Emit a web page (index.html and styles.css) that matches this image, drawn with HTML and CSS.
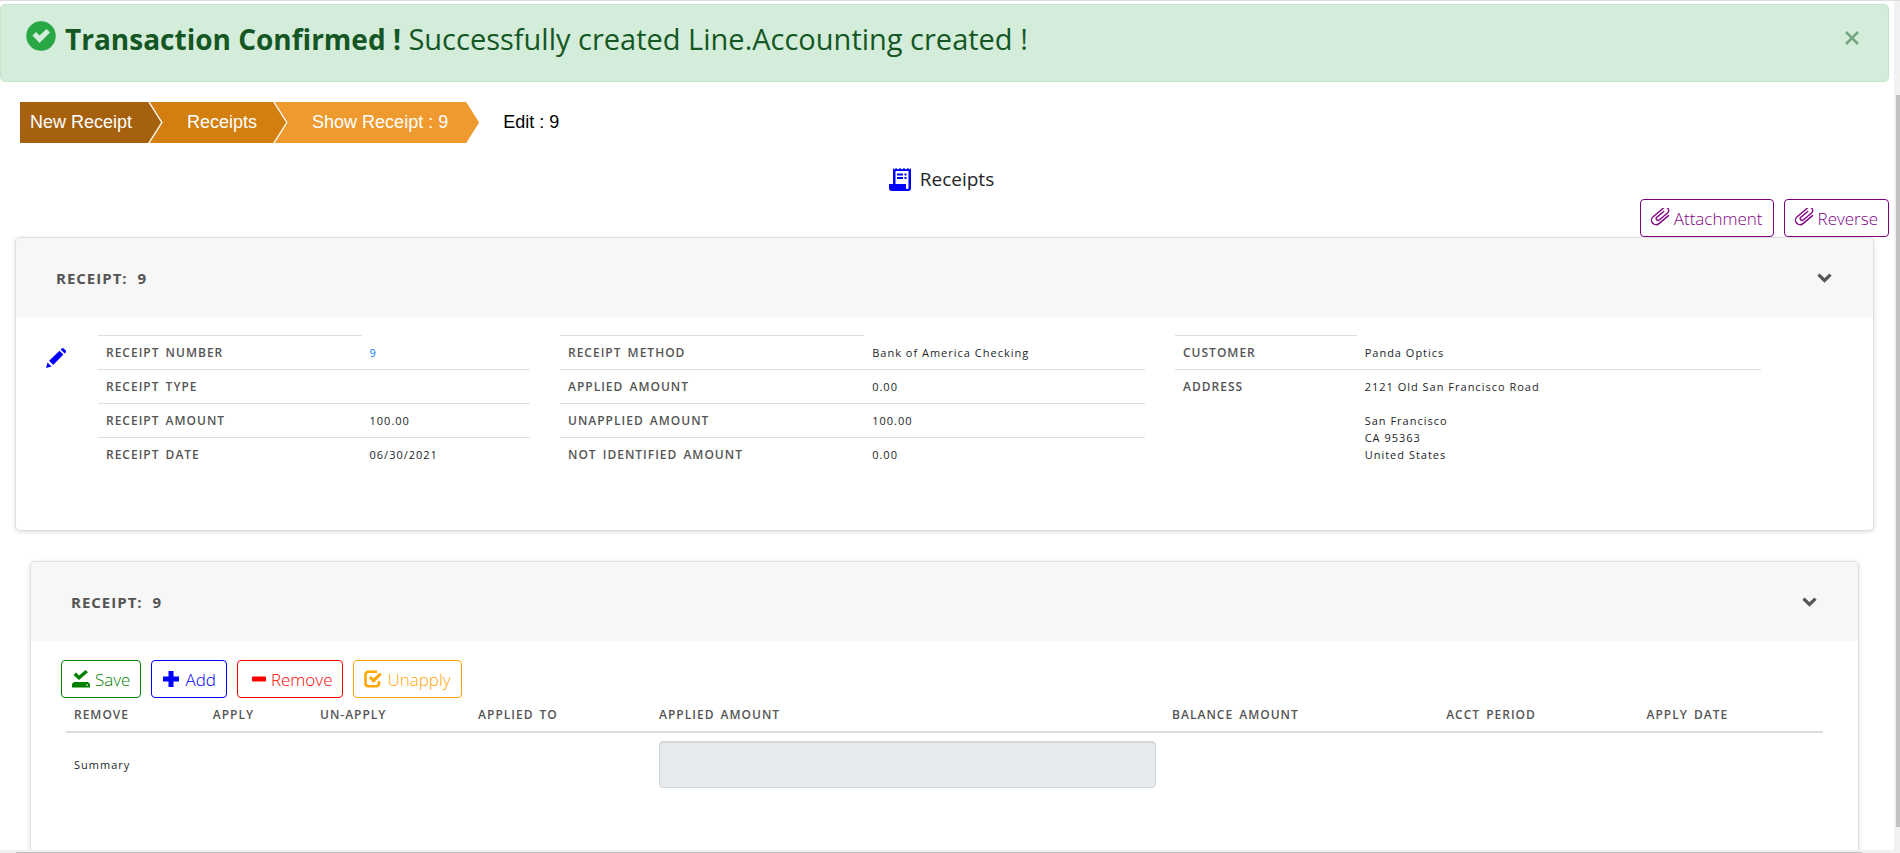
FILE: index.html
```html
<!DOCTYPE html>
<html lang="en">
<head>
<meta charset="utf-8">
<title>Receipts</title>
<link rel="stylesheet" href="styles.css">
</head>
<body>
<svg class="sprite" aria-hidden="true">
  <symbol id="clip" viewBox="0 0 20 20"><path d="M16 14.500H3.500a4.500 4.500 0 0 1 0-9H17a3.200 3.200 0 0 1 0 6.400H6a1.800 1.800 0 0 1 0-3.600H15" transform="translate(0 -2) rotate(-40 10 10)" fill="none" stroke="currentColor" stroke-width="1.400" stroke-linecap="round"/></symbol>
  <symbol id="chevron" viewBox="0 0 15 10"><path d="M1.500 1.700 7.500 7.500 13.500 1.700" fill="none" stroke="currentColor" stroke-width="3.200"/></symbol>
</svg>
<div class="page">
  <div class="alert" role="alert">
    <svg class="alert-icon" viewBox="0 0 30 30"><circle cx="15" cy="15" r="14.700" fill="#28a745"/><path d="M6.500 14.500 10 11l3.500 3.500L20.500 8 24 11.500 13.500 22z" fill="#d4edda"/></svg>
    <p class="alert-text"><strong>Transaction Confirmed !</strong> Successfully created Line.Accounting created !</p>
    <button class="close" type="button" aria-label="Close"><svg viewBox="0 0 14 14"><path d="M1 1l12 12M13 1L1 13" stroke="currentColor" stroke-width="2.600"/></svg></button>
  </div>

  <nav class="crumbs" aria-label="Breadcrumb">
    <a class="crumb crumb-dark" href="#">New Receipt</a>
    <a class="crumb crumb-mid" href="#">Receipts</a>
    <a class="crumb crumb-light" href="#">Show Receipt : 9</a>
    <span class="crumb-current">Edit : 9</span>
  </nav>

  <h1 class="title">
    <svg class="title-icon" viewBox="0 0 22 24"><path d="M4 17V1l1.500 1.500L7 1l2 1.500L11 1l2 1.500L15 1l2 1.500L19 1l1.500 1.500L22 1v20a3 3 0 0 1-3 3H3a3 3 0 0 1-3-3v-4zM6.500 4v13H17v4c0 1.300 2.500 1.300 2.500 0V4z" fill="#00f" fill-rule="evenodd"/><path d="M8 6.500h6v2H8zM8 10h6v2H8zM15.500 6.500h2v2h-2zM15.500 10h2v2h-2z" fill="#00f"/></svg>
    Receipts
  </h1>

  <div class="actions">
    <button class="btn btn-purple" type="button"><svg class="clip"><use href="#clip"/></svg>Attachment</button>
    <button class="btn btn-purple" type="button"><svg class="clip"><use href="#clip"/></svg>Reverse</button>
  </div>

  <section class="card">
    <header class="card-head">
      <h2>Receipt: 9</h2>
      <button class="toggle" type="button" aria-label="Collapse"><svg><use href="#chevron"/></svg></button>
    </header>
    <div class="details">
      <button class="edit" type="button" aria-label="Edit receipt"><svg viewBox="0 0 20 20"><path d="M0 20l1.500-5.500 4 4zM3.200 12.800 13.500 2.700l3.900 3.900L7.200 17zM14.600 1.600 15.700.5q1-.9 2 0l2 2q.8 1 0 1.900l-1.100 1.100z" fill="#00f"/></svg></button>
      <table class="facts facts-a">
        <tr><th scope="row">Receipt Number</th><td><a href="#">9</a></td></tr>
        <tr><th scope="row">Receipt Type</th><td></td></tr>
        <tr><th scope="row">Receipt Amount</th><td>100.00</td></tr>
        <tr><th scope="row">Receipt Date</th><td>06/30/2021</td></tr>
      </table>
      <table class="facts facts-b">
        <tr><th scope="row">Receipt Method</th><td>Bank of America Checking</td></tr>
        <tr><th scope="row">Applied Amount</th><td>0.00</td></tr>
        <tr><th scope="row">Unapplied Amount</th><td>100.00</td></tr>
        <tr><th scope="row">Not Identified Amount</th><td>0.00</td></tr>
      </table>
      <table class="facts facts-c">
        <tr><th scope="row">Customer</th><td>Panda Optics</td></tr>
        <tr><th scope="row">Address</th><td>2121 Old San Francisco Road<br><br>San Francisco<br>CA 95363<br>United States</td></tr>
      </table>
    </div>
  </section>

  <section class="card card-inner">
    <header class="card-head">
      <h2>Receipt: 9</h2>
      <button class="toggle" type="button" aria-label="Collapse"><svg><use href="#chevron"/></svg></button>
    </header>
    <div class="lines">
      <div class="toolbar">
        <button class="btn btn-green" type="button"><svg viewBox="0 0 18 18"><path d="M1.500 5 4 2.500l3 3L13.500 0 16 2.300 7 10zM2 12h14l2 2v3.500H0V14z" fill="currentColor"/><path d="M14 15h2" stroke="#fff"/></svg>Save</button>
        <button class="btn btn-blue" type="button"><svg viewBox="0 0 18 18"><path d="M6.500 1h5v5.500H17v5h-5.500V17h-5v-5.500H1v-5h5.500z" fill="currentColor"/></svg>Add</button>
        <button class="btn btn-red" type="button"><svg viewBox="0 0 18 18"><rect x="4" y="6.500" width="14" height="5" rx="1" fill="currentColor"/></svg>Remove</button>
        <button class="btn btn-orange" type="button"><svg viewBox="0 0 18 18"><path d="M13 1.800H4.500Q1.500 1.800 1.500 5v8Q1.500 16.300 4.500 16.300H12q3 0 3-3.300v-2" fill="none" stroke="currentColor" stroke-width="2.600"/><path d="M5 8 7 6l2.500 2.500L15.500 2.500l2.200 2.200L9.500 13z" fill="currentColor"/></svg>Unapply</button>
      </div>
      <table class="grid">
        <colgroup><col class="c-remove"><col class="c-apply"><col class="c-unapply"><col class="c-to"><col class="c-amount"><col class="c-balance"><col class="c-period"><col></colgroup>
        <thead><tr><th>Remove</th><th>Apply</th><th>Un-apply</th><th>Applied To</th><th>Applied Amount</th><th>Balance Amount</th><th>Acct Period</th><th>Apply Date</th></tr></thead>
        <tbody><tr><td>Summary</td><td></td><td></td><td></td><td><input class="field" type="text" aria-label="Applied amount" disabled></td><td></td><td></td><td></td></tr></tbody>
      </table>
    </div>
  </section>
</div>
<div class="scroll-y"><div class="thumb-y"></div></div>
<div class="scroll-x"><div class="thumb-x"></div></div>
</body>
</html>
```
FILE: styles.css
```css
* { box-sizing: border-box; }
html { overflow: hidden; height: 100%; }
body {
  margin: 0;
  border-top: 1px solid #dcdce2;
  background: #fff;
  color: #212529;
  font-family: "Open Sans", "Noto Sans", sans-serif;
  font-size: 16px;
}
button { font-family: inherit; background: none; border: 0; padding: 0; }
h1, h2, p { margin: 0; font-weight: 400; }
a { color: #007bff; text-decoration: none; }
.sprite { position: absolute; width: 0; height: 0; }
.page { padding: 3px 11px 0 0; }

.alert {
  display: flex;
  align-items: flex-start;
  gap: 9px;
  height: 78px;
  padding: 16px 29px 0 25px;
  border: 1px solid #c3e6cb;
  border-radius: 5px;
  background: #d4edda;
  color: #155724;
}
.alert-icon { width: 30px; height: 30px; }
.alert-text { flex: 1; font-size: 29px; line-height: 36px; }
.alert-text strong { font-size: 28px; }
.close { padding: 10px 0; color: #76a681; }
.close svg { display: block; width: 14px; height: 14px; }

.crumbs {
  display: flex;
  height: 41px;
  margin: 20px 0 0 20px;
  font: 18px/41px "Liberation Sans", Arial, sans-serif;
}
.crumb {
  height: 41px;
  margin-right: -13px;
  padding: 0 31px 0 37px;
  color: #fff;
  clip-path: polygon(0 0, calc(100% - 13px) 0, 100% 50%, calc(100% - 13px) 100%, 0 100%);
}
.crumb-dark { z-index: 3; padding-left: 10px; background: #a5610d; }
.crumb-mid { z-index: 2; background: #d27f10; }
.crumb-light { z-index: 1; background: #ee9a2e; }
.crumb-dark, .crumb-mid { position: relative; }
.crumb-dark::after, .crumb-mid::after {
  content: "";
  position: absolute;
  inset: 0;
  background: #fff3e0;
  clip-path: polygon(calc(100% - 15px) 0, calc(100% - 13px) 0, 100% 50%, calc(100% - 13px) 100%, calc(100% - 15px) 100%, calc(100% - 2px) 50%);
}
.crumb-current { padding-left: 37px; color: #000; }

.title {
  display: flex;
  justify-content: center;
  align-items: center;
  gap: 9px;
  height: 30px;
  margin: 21px 6px 0 0;
  font-size: 19px;
}
.title-icon { width: 22px; height: 24px; }

.actions { display: flex; justify-content: flex-end; gap: 10px; margin-top: 5px; }
.btn {
  display: flex;
  align-items: center;
  gap: 5px;
  height: 38px;
  padding: 0 10px;
  border: 1px solid currentColor;
  border-radius: 4px;
  background: #fff;
  font-size: 17px;
  font-weight: 300;
}
.btn svg { width: 18px; height: 18px; }
.btn .clip { width: 20px; height: 20px; overflow: visible; }
.btn-purple { gap: 3px; color: #800080; }
.btn-green { color: #008000; }
.btn-blue { color: #00f; }
.btn-red { color: #f00; }
.btn-orange { color: #ffa500; }

.card {
  margin: 0 15px;
  border: 1px solid #dedfe0;
  border-radius: 5px;
  background: #fff;
  box-shadow: 0 1px 4px rgba(0, 0, 0, .14);
  overflow: hidden;
}
.card-inner { margin: 30px 30px 0; }
.card-head {
  display: flex;
  justify-content: space-between;
  align-items: center;
  height: 79px;
  padding: 0 41px 0 40px;
  background: #f7f7f7;
  color: #555;
}
.card-head h2 {
  font-size: 15px;
  font-weight: 700;
  letter-spacing: 1px;
  word-spacing: 5px;
  text-transform: uppercase;
}
.toggle { color: #555; }
.toggle svg { display: block; width: 15px; height: 10px; }

.details {
  display: grid;
  grid-template-columns: 22px 432fr 585fr 586fr;
  column-gap: 30px;
  align-items: start;
  min-height: 213px;
  padding: 18px 112px 0 30px;
}
.edit { margin-top: 13px; }
.edit svg { display: block; width: 20px; height: 20px; }

.facts, .grid {
  width: 100%;
  border-collapse: collapse;
  table-layout: fixed;
  font-size: 11px;
  line-height: 17px;
  letter-spacing: 1px;
}
.facts th, .facts td { padding: 8px; border-top: 1px solid #ddd; text-align: left; vertical-align: top; }
.facts tr:first-child td { border-top: 0; }
.facts th, .grid th { color: #555; font-size: 12px; font-weight: 600; word-spacing: 2px; text-transform: uppercase; }
.facts-a th { width: 61%; }
.facts-b th { width: 52%; }
.facts-c th { width: 31%; }

.lines { min-height: 211px; padding: 19px 35px 0; }
.toolbar { display: flex; gap: 10px; margin-left: -5px; }
.grid th { height: 34px; padding: 0 8px; border-bottom: 2px solid #ddd; text-align: left; }
.grid td { padding: 8px; }
.c-remove { width: 7.9%; }
.c-apply { width: 6.1%; }
.c-unapply { width: 9%; }
.c-to { width: 10.3%; }
.c-amount { width: 29.2%; }
.c-balance { width: 15.6%; }
.c-period { width: 11.4%; }
.field {
  display: block;
  width: 100%;
  height: 47px;
  padding: 0 12px;
  border: 1px solid #ced4da;
  border-radius: 4px;
  background: #e7ebee;
  box-shadow: inset 0 1px 1px rgba(0, 0, 0, .08);
}

.scroll-y { position: fixed; top: 1px; right: 0; bottom: 0; width: 6px; padding: 94px 0 26px 2px; background: #f1f1f1; }
.thumb-y { height: 100%; background: #c1c1c1; }
.scroll-x { position: fixed; right: 6px; bottom: 0; left: 0; height: 3px; padding: 2px 32px 0 16px; background: #f1f1f1; }
.thumb-x { height: 1px; background: #c1c1c1; }
```
